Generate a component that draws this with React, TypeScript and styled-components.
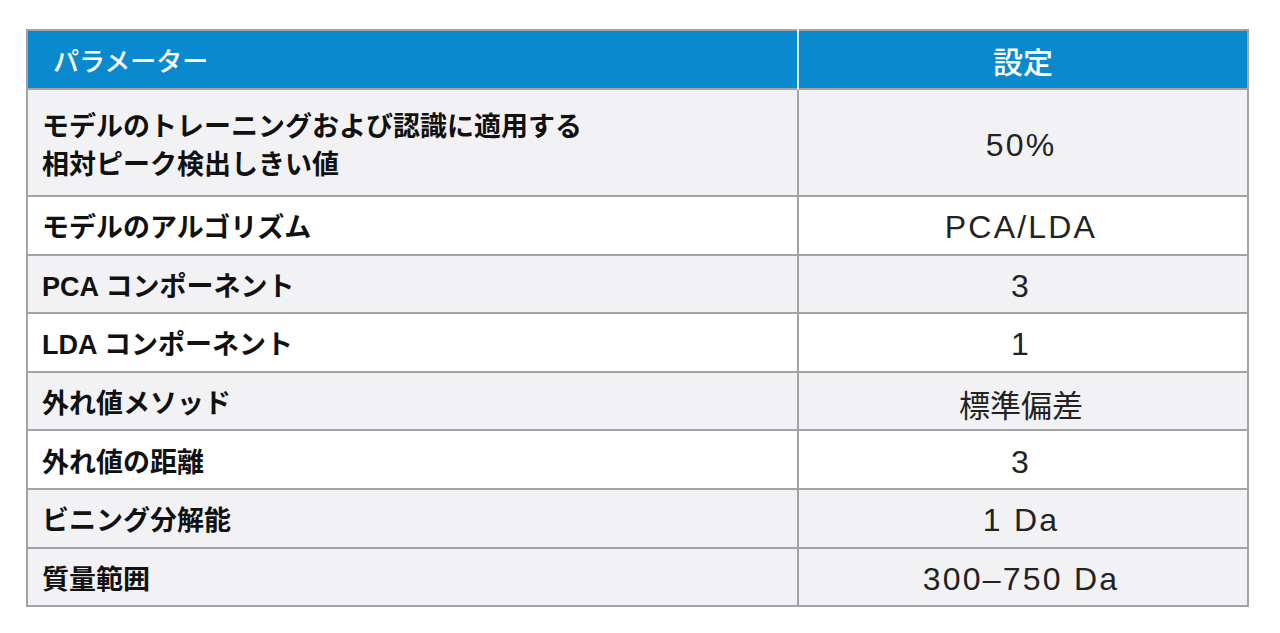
import React, { FC } from 'react';
import styled, { createGlobalStyle } from 'styled-components';

const GlobalStyle = createGlobalStyle`
  html, body {
    margin: 0;
    padding: 0;
    background: #ffffff;
  }
  body {
    font-family: "Liberation Sans", "Noto Sans CJK JP", sans-serif;
  }
`;

const Page = styled.div`
  padding: 29px 31px 0 26px;
`;

const Table = styled.table`
  width: 100%;
  border-collapse: collapse;
  table-layout: fixed;
  border: 2px solid #a3a3a6;
`;

const HeadRow = styled.tr`
  height: 59px;
  background: #0a89cf;
`;

const HeadCell = styled.th<{ align?: 'left' | 'center' }>`
  color: #ffffff;
  font-family: "Liberation Sans", "Noto Sans CJK JP", sans-serif;
  font-weight: 500;
  font-size: ${({ align }) => (align === 'center' ? '30px' : '26px')};
  text-align: ${({ align }) => align || 'left'};
  padding: 0 0 0 ${({ align }) => (align === 'center' ? '0' : '25px')};
  border-right: 2px solid #d8ecf8;
  &:last-child {
    border-right: none;
  }
`;

const Row = styled.tr<{ shaded?: boolean; tall?: boolean }>`
  height: ${({ tall }) => (tall ? '107px' : '58.6px')};
  background: ${({ shaded }) => (shaded ? '#f2f2f5' : '#ffffff')};
  border-top: 2px solid #a3a3a6;
`;

const NameCell = styled.td`
  font-weight: 700;
  font-size: 27px;
  line-height: 38px;
  color: #111111;
  padding: 6px 0 0 14px;
  border-right: 2px solid #a3a3a6;
`;

const ValueCell = styled.td<{ cjk?: boolean }>`
  font-weight: 400;
  font-size: ${({ cjk }) => (cjk ? '31px' : '32px')};
  letter-spacing: ${({ cjk }) => (cjk ? '0' : '2.2px')};
  color: #222222;
  text-align: center;
  padding: 5px 4px 0 0;
`;

const rows: { name: string[]; value: string; shaded: boolean; cjk?: boolean }[] = [
  {
    name: ['モデルのトレーニングおよび認識に適用する', '相対ピーク検出しきい値'],
    value: '50%',
    shaded: true,
  },
  { name: ['モデルのアルゴリズム'], value: 'PCA/LDA', shaded: false },
  { name: ['PCA コンポーネント'], value: '3', shaded: true },
  { name: ['LDA コンポーネント'], value: '1', shaded: false },
  { name: ['外れ値メソッド'], value: '標準偏差', shaded: true, cjk: true },
  { name: ['外れ値の距離'], value: '3', shaded: false },
  { name: ['ビニング分解能'], value: '1 Da', shaded: true },
  { name: ['質量範囲'], value: '300–750 Da', shaded: true },
];

const App: FC = () => (
  <>
    <GlobalStyle />
    <Page>
      <Table>
        <colgroup>
          <col style={{ width: '771px' }} />
          <col />
        </colgroup>
        <thead>
          <HeadRow>
            <HeadCell>パラメーター</HeadCell>
            <HeadCell align="center">設定</HeadCell>
          </HeadRow>
        </thead>
        <tbody>
          {rows.map((r, i) => (
            <Row key={i} shaded={r.shaded} tall={r.name.length > 1}>
              <NameCell>
                {r.name.map((line, j) => (
                  <React.Fragment key={j}>
                    {j > 0 && <br />}
                    {line}
                  </React.Fragment>
                ))}
              </NameCell>
              <ValueCell cjk={r.cjk}>{r.value}</ValueCell>
            </Row>
          ))}
        </tbody>
      </Table>
    </Page>
  </>
);

export default App;
